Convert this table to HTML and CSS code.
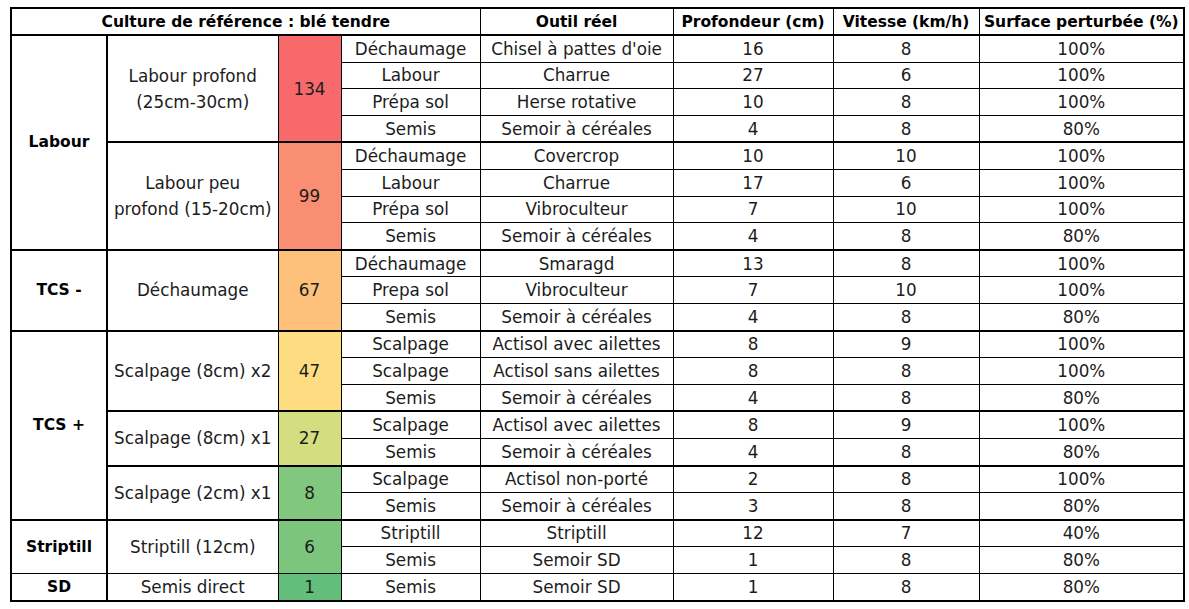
FILE: index.html
```html
<!DOCTYPE html>
<html lang="fr">
<head>
<meta charset="utf-8">
<title>Culture de référence : blé tendre</title>
<link rel="stylesheet" href="styles.css">
</head>
<body>
<table class="grid">
  <colgroup>
    <col class="c-grp"><col class="c-sub"><col class="c-score"><col class="c-step">
    <col class="c-tool"><col class="c-depth"><col class="c-speed"><col class="c-surf">
  </colgroup>
  <thead>
    <tr class="head">
      <th colspan="4">Culture de référence : blé tendre</th>
      <th>Outil réel</th>
      <th>Profondeur (cm)</th>
      <th>Vitesse (km/h)</th>
      <th>Surface perturbée (%)</th>
    </tr>
  </thead>
  <tbody>
    <tr>
      <td class="grp" rowspan="8">Labour</td>
      <td class="sub" rowspan="4">Labour profond<br>(25cm-30cm)</td>
      <td class="score" rowspan="4" style="background:#f8696b">134</td>
      <td>Déchaumage</td><td>Chisel à pattes d'oie</td><td>16</td><td>8</td><td>100%</td>
    </tr>
    <tr><td>Labour</td><td>Charrue</td><td>27</td><td>6</td><td>100%</td></tr>
    <tr><td>Prépa sol</td><td>Herse rotative</td><td>10</td><td>8</td><td>100%</td></tr>
    <tr><td>Semis</td><td>Semoir à céréales</td><td>4</td><td>8</td><td>80%</td></tr>

    <tr class="sstart">
      <td class="sub" rowspan="4">Labour peu<br>profond (15-20cm)</td>
      <td class="score" rowspan="4" style="background:#fa8e72">99</td>
      <td>Déchaumage</td><td>Covercrop</td><td>10</td><td>10</td><td>100%</td>
    </tr>
    <tr><td>Labour</td><td>Charrue</td><td>17</td><td>6</td><td>100%</td></tr>
    <tr><td>Prépa sol</td><td>Vibroculteur</td><td>7</td><td>10</td><td>100%</td></tr>
    <tr><td>Semis</td><td>Semoir à céréales</td><td>4</td><td>8</td><td>80%</td></tr>

    <tr class="gstart">
      <td class="grp" rowspan="3">TCS -</td>
      <td class="sub" rowspan="3">Déchaumage</td>
      <td class="score" rowspan="3" style="background:#fdc17c">67</td>
      <td>Déchaumage</td><td>Smaragd</td><td>13</td><td>8</td><td>100%</td>
    </tr>
    <tr><td>Prepa sol</td><td>Vibroculteur</td><td>7</td><td>10</td><td>100%</td></tr>
    <tr><td>Semis</td><td>Semoir à céréales</td><td>4</td><td>8</td><td>80%</td></tr>

    <tr class="gstart">
      <td class="grp" rowspan="7">TCS +</td>
      <td class="sub" rowspan="3">Scalpage (8cm) x2</td>
      <td class="score" rowspan="3" style="background:#fedd82">47</td>
      <td>Scalpage</td><td>Actisol avec ailettes</td><td>8</td><td>9</td><td>100%</td>
    </tr>
    <tr><td>Scalpage</td><td>Actisol sans ailettes</td><td>8</td><td>8</td><td>100%</td></tr>
    <tr><td>Semis</td><td>Semoir à céréales</td><td>4</td><td>8</td><td>80%</td></tr>

    <tr class="sstart">
      <td class="sub" rowspan="2">Scalpage (8cm) x1</td>
      <td class="score" rowspan="2" style="background:#d4de81">27</td>
      <td>Scalpage</td><td>Actisol avec ailettes</td><td>8</td><td>9</td><td>100%</td>
    </tr>
    <tr><td>Semis</td><td>Semoir à céréales</td><td>4</td><td>8</td><td>80%</td></tr>

    <tr class="sstart">
      <td class="sub" rowspan="2">Scalpage (2cm) x1</td>
      <td class="score" rowspan="2" style="background:#81c77d">8</td>
      <td>Scalpage</td><td>Actisol non-porté</td><td>2</td><td>8</td><td>100%</td>
    </tr>
    <tr><td>Semis</td><td>Semoir à céréales</td><td>3</td><td>8</td><td>80%</td></tr>

    <tr class="gstart">
      <td class="grp" rowspan="2">Striptill</td>
      <td class="sub" rowspan="2">Striptill (12cm)</td>
      <td class="score" rowspan="2" style="background:#7bc57c">6</td>
      <td>Striptill</td><td>Striptill</td><td>12</td><td>7</td><td>40%</td>
    </tr>
    <tr><td>Semis</td><td>Semoir SD</td><td>1</td><td>8</td><td>80%</td></tr>

    <tr>
      <td class="grp">SD</td>
      <td class="sub">Semis direct</td>
      <td class="score" style="background:#63be7b">1</td>
      <td>Semis</td><td>Semoir SD</td><td>1</td><td>8</td><td>80%</td>
    </tr>
  </tbody>
</table>
</body>
</html>
```

FILE: styles.css
```css
html, body {
  margin: 0;
  padding: 0;
  background: #ffffff;
}

body {
  padding: 7px 0 0 10px;
  font-family: "DejaVu Sans", "Open Sans", sans-serif;
  font-size: 16.8px;
  color: #1c1c1c;
}

.grid {
  border-collapse: collapse;
  table-layout: fixed;
  width: 1173px;
  border: 2px solid #000;
}

.c-grp { width: 96px; }
.c-sub { width: 171px; }
.c-score { width: 63px; }
.c-step { width: 139px; }
.c-tool { width: 193px; }
.c-depth { width: 160px; }
.c-speed { width: 146px; }
.c-surf { width: 205px; }

.grid th,
.grid td {
  border: 1px solid #000;
  padding: 0 1px;
  text-align: center;
  vertical-align: middle;
  white-space: nowrap;
  line-height: 18px;
}

.grid td {
  height: 25.6px;
  font-weight: 400;
}

.grid th {
  height: 25px;
  font-size: 15.5px;
  font-weight: 700;
  color: #000;
  border-bottom: 2px solid #000;
}

.grid td.grp {
  font-size: 15.5px;
  font-weight: 700;
  color: #000;
  border-right: 2px solid #000;
}

.grid td.sub {
  line-height: 26px;
}

.grid tr.gstart td,
.grid tr.sstart td {
  border-top: 2px solid #000;
}
```
